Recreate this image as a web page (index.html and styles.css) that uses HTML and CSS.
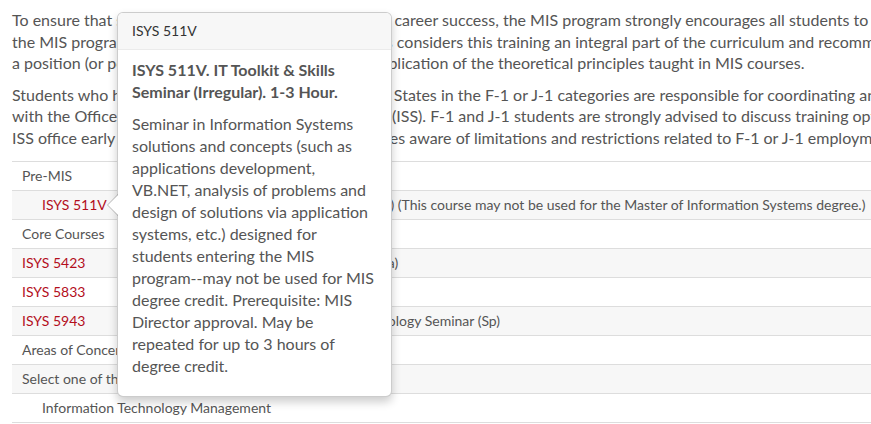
FILE: index.html
```html
<!DOCTYPE html>
<html lang="en">
<head>
<meta charset="utf-8">
<title>MIS Program</title>
<link rel="stylesheet" href="styles.css">
</head>
<body>
<div class="page">
  <div class="content">
    <p class="lines">To ensure that students are appropriately prepared for career success, the MIS program strongly encourages all students to participate in an internship or co-op program, and<br>the MIS program within the Walton school of Business considers this training an integral part of the curriculum and recommends that students seek<br>a position (or positions) that will provide a practical application of the theoretical principles taught in MIS courses.</p>
    <p class="lines">Students who have been lately admitted to the United States in the F-1 or J-1 categories are responsible for coordinating any internship or co-op employment<br>with the Office of International Students and Scholars (ISS). F-1 and J-1 students are strongly advised to discuss training options with the<br>ISS office early in the process so that a student becomes aware of limitations and restrictions related to F-1 or J-1 employment.</p>

    <table class="courses">
      <tbody>
        <tr><td colspan="3">Pre-MIS</td></tr>
        <tr class="alt"><td class="code indent"><a class="course-link" href="#">ISYS 511V</a></td><td>IT Toolkit &amp; Skills Seminar (Irregular) (This course may not be used for the Master of Information Systems degree.)</td><td class="hours">1-3</td></tr>
        <tr><td colspan="3">Core Courses</td></tr>
        <tr class="alt"><td class="code"><a class="course-link" href="#">ISYS 5423</a></td><td>Seminar in System Development (Fa)</td><td class="hours">3</td></tr>
        <tr><td class="code"><a class="course-link" href="#">ISYS 5833</a></td><td>Data Management Systems</td><td class="hours">3</td></tr>
        <tr class="alt"><td class="code"><a class="course-link" href="#">ISYS 5943</a></td><td>Recent Issues in Information Technology Seminar (Sp)</td><td class="hours">3</td></tr>
        <tr><td colspan="3">Areas of Concentration</td></tr>
        <tr class="alt"><td colspan="3">Select one of the following:</td></tr>
        <tr><td colspan="3" class="indent">Information Technology Management</td></tr>
      </tbody>
    </table>
  </div>

  <div class="popover">
    <span class="popover-arrow"></span>
    <h3 class="popover-title">ISYS 511V</h3>
    <div class="popover-content">
      <p class="course-title">ISYS 511V. IT Toolkit &amp; Skills Seminar (Irregular). 1-3 Hour.</p>
      <p class="course-desc">Seminar in Information Systems solutions and concepts (such as applications development, VB.NET, analysis of problems and design of solutions via application systems, etc.) designed for students entering the MIS program--may not be used for MIS degree credit. Prerequisite: MIS Director approval. May be repeated for up to 3 hours of degree credit.</p>
    </div>
  </div>
</div>
</body>
</html>
```
FILE: styles.css
```css
html, body {
  margin: 0;
  padding: 0;
  background: #fff;
}
body {
  overflow: hidden;
  font-family: Lato, "Open Sans", sans-serif;
  color: #555;
}
.page {
  position: relative;
  width: 871px;
  height: 424px;
  overflow: hidden;
}
.content {
  width: 1250px;
  padding: 9px 12px 0;
}
.lines {
  margin: 0 0 10px;
  font-size: 16px;
  line-height: 21.5px;
  white-space: nowrap;
}
.courses {
  margin-top: 13px;
  width: 1220px;
  border-collapse: collapse;
  font-size: 14px;
  line-height: 18px;
}
.courses td {
  padding: 5px 10px;
  border-top: 1px solid #ddd;
  white-space: nowrap;
  vertical-align: top;
}
.courses tr:last-child td {
  border-bottom: 1px solid #ddd;
}
.courses tr.alt td {
  background: #f7f7f7;
}
.courses td.code {
  width: 133px;
}
.courses td.indent {
  padding-left: 30px;
}
.courses td.code.indent {
  width: 113px;
}
.courses td.hours {
  width: 40px;
  text-align: right;
}
.course-link {
  color: #b30e1c;
  text-decoration: none;
}
.popover {
  position: absolute;
  left: 117px;
  top: 12px;
  width: 275px;
  box-sizing: border-box;
  background: #fff;
  border: 1px solid rgba(0, 0, 0, 0.2);
  border-radius: 6px;
  box-shadow: 0 5px 10px rgba(0, 0, 0, 0.2);
}
.popover-arrow,
.popover-arrow::after {
  position: absolute;
  width: 0;
  height: 0;
  border-style: solid;
  border-color: transparent;
}
.popover-arrow {
  top: 50%;
  left: -11px;
  margin-top: -11px;
  border-width: 11px 11px 11px 0;
  border-right-color: rgba(0, 0, 0, 0.25);
}
.popover-arrow::after {
  content: "";
  left: 1px;
  bottom: -10px;
  border-width: 10px 10px 10px 0;
  border-right-color: #fff;
}
.popover-title {
  margin: 0;
  padding: 8px 14px;
  font-size: 14px;
  line-height: 20px;
  font-weight: normal;
  color: #333;
  background: #f7f7f7;
  border-bottom: 1px solid #ebebeb;
  border-radius: 5px 5px 0 0;
}
.popover-content {
  padding: 9px 15px 9px 14px;
  font-size: 16px;
  line-height: 22px;
  color: #555;
}
.popover-content p {
  margin: 0 0 10px;
}
.course-title {
  font-weight: bold;
}
```
